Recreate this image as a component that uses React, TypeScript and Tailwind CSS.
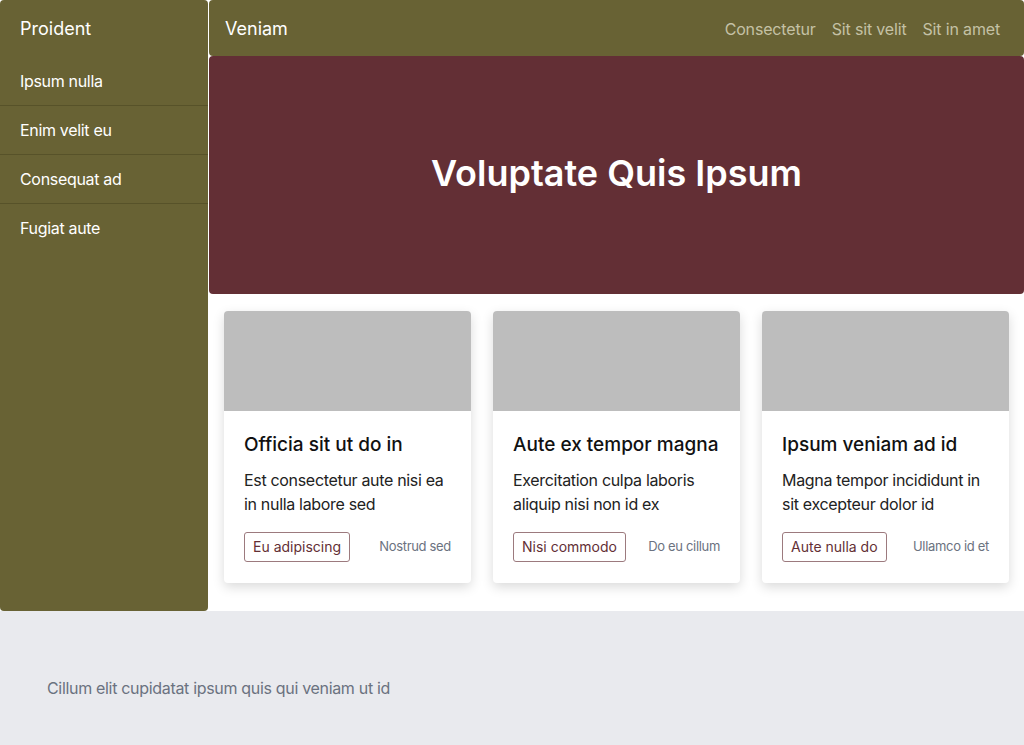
import React from "react";

const cards = [
  { title: "Officia sit ut do in", text: "Est consectetur aute nisi ea in nulla labore sed", btn: "Eu adipiscing", meta: "Nostrud sed" },
  { title: "Aute ex tempor magna", text: "Exercitation culpa laboris aliquip nisi non id ex", btn: "Nisi commodo", meta: "Do eu cillum" },
  { title: "Ipsum veniam ad id", text: "Magna tempor incididunt in sit excepteur dolor id", btn: "Aute nulla do", meta: "Ullamco id et" },
];

export default function App() {
  return (
    <div className="min-h-screen bg-white tracking-[-0.02em]" style={{ fontFamily: "Inter, 'Noto Sans', sans-serif" }}>
      <div className="flex">
        <aside className="w-[208px] shrink-0 bg-[#686234] rounded-[4px] text-white">
          <div className="h-[57px] flex items-center px-5 text-lg tracking-normal">Proident</div>
          <nav className="flex flex-col">
            {["Ipsum nulla", "Enim velit eu", "Consequat ad", "Fugiat aute"].map((t, i) => (
              <div key={t} className={`px-5 py-3 text-base leading-6 ${i < 3 ? "border-b border-[#575229]" : ""}`}>
                {t}
              </div>
            ))}
          </nav>
        </aside>
        <main className="flex-1 flex flex-col pl-px">
          <header className="h-[56px] bg-[#686234] rounded-[4px] flex items-center justify-between pl-4 pr-6">
            <div className="text-lg text-white pt-px tracking-normal">Veniam</div>
            <div className="flex gap-4 text-base text-[#c4c1a5] pt-px tracking-[-0.01em]">
              <span>Consectetur</span>
              <span>Sit sit velit</span>
              <span>Sit in amet</span>
            </div>
          </header>
          <section className="h-[238px] bg-[#632f35] rounded-[4px] flex items-center justify-center">
            <h1 className="text-4xl font-semibold text-white tracking-normal pb-1">Voluptate Quis Ipsum</h1>
          </section>
          <div className="grid grid-cols-3 gap-[22px] px-[15px] pt-[17px] pb-[28px]">
            {cards.map((c) => (
              <div key={c.title} className="bg-white rounded-[4px] shadow-[0_4px_12px_rgba(0,0,0,0.15)] overflow-hidden">
                <div className="h-[100px] bg-[#bdbdbd]" />
                <div className="px-5 pt-5 pb-[21px]">
                  <h2 className="text-[19px] font-medium text-[#111] leading-7 tracking-normal">{c.title}</h2>
                  <p className="mt-[9px] text-base leading-6 text-[#222]">{c.text}</p>
                  <div className="mt-4 flex items-center justify-between">
                    <span className="border border-[#9c7a7e] rounded-[3px] px-2 h-[30px] flex items-center text-sm text-[#632f35] tracking-normal">{c.btn}</span>
                    <span className="text-[13px] text-[#6b7280]">{c.meta}</span>
                  </div>
                </div>
              </div>
            ))}
          </div>
        </main>
      </div>
      <footer className="bg-[#e9eaee] px-[47px] pt-[65px] pb-16 text-base leading-6 text-[#6b7280]">
        Cillum elit cupidatat ipsum quis qui veniam ut id
      </footer>
    </div>
  );
}
